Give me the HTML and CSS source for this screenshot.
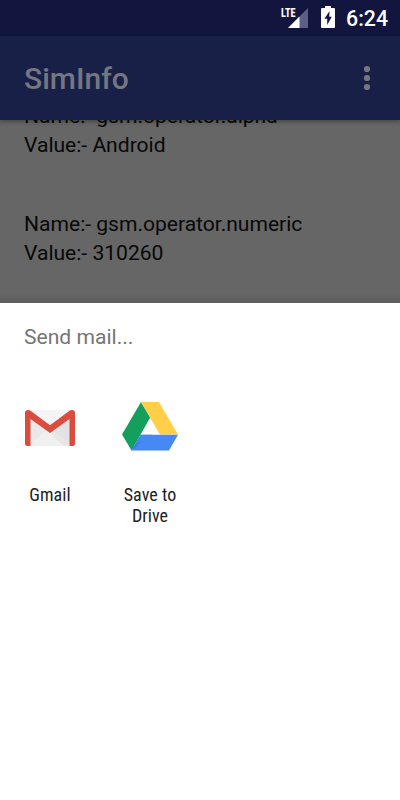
FILE: index.html
```html
<!DOCTYPE html>
<html lang="en">
<head>
<meta charset="utf-8">
<title>SimInfo</title>
<link rel="stylesheet" href="styles.css">
</head>
<body>
<div class="screen">
  <header class="status">
    <svg class="signal" width="30" height="24" viewBox="0 0 30 24">
      <path d="M28 2V22H8Z" fill="#5b5f86"/>
      <path d="M19.500 10.500V22H8Z" fill="#fff"/>
      <path d="M0 0H17V12H0Z" fill="#12163f"/>
      <text class="lte" x="1" y="10.900" textLength="14.500" lengthAdjust="spacingAndGlyphs">LTE</text>
    </svg>
    <svg class="battery" width="14" height="22" viewBox="0 0 14 22">
      <path fill="#fff" fill-rule="evenodd" d="M4 0H10V2H13Q14 2 14 3V21Q14 22 13 22H1Q0 22 0 21V3Q0 2 1 2H4ZM8.6 5L3.4 12.8H6.2V19L10.8 10.8H8.2Z"/>
    </svg>
    <span class="clock">6:24</span>
  </header>
  <div class="appbar">
    <h1 class="title">SimInfo</h1>
    <svg class="more" width="8" height="26" viewBox="0 0 8 26" fill="#757780">
      <circle cx="4" cy="4" r="3.1"/><circle cx="4" cy="13" r="3.1"/><circle cx="4" cy="22" r="3.1"/>
    </svg>
  </div>
  <main class="content">
    <p class="entry">Name:- gsm.operator.alpha<br>Value:- Android</p>
    <p class="entry">Name:- gsm.operator.numeric<br>Value:- 310260</p>
  </main>
  <section class="sheet">
    <h2 class="prompt">Send mail...</h2>
    <div class="apps">
      <div class="app">
        <svg class="icon" width="64" height="64" viewBox="0 0 64 64">
          <path d="M10 14H54V50H10Z" fill="#e9e9e9"/>
          <path d="M10 50L32 31L54 50Z" fill="#f0f0f0"/>
          <path d="M10 14H54L32 31Z" fill="#f5f5f5"/>
          <path d="M32 37L54 20V50H46Z" fill="#dadada" opacity=".4"/>
          <path d="M7 17Q7 14 10 14Q11.500 14 12.500 14.800L32 29.300L51.500 14.800Q52.500 14 54 14Q57 14 57 17V47.500Q57 50 54.500 50H51.500V23L32 37L12.500 23V50H9.500Q7 50 7 47.500Z" fill="#db4c3f"/>
        </svg>
        <span class="label">Gmail</span>
      </div>
      <div class="app">
        <svg class="icon" width="64" height="64" viewBox="0 0 64 64">
          <defs>
            <linearGradient id="fold" x1="0" y1="1" x2="1" y2="0">
              <stop offset="0" stop-color="#3b72d4"/>
              <stop offset=".6" stop-color="#4688f4"/>
            </linearGradient>
          </defs>
          <path d="M23 6L32.200 21.500L13.500 54.500L4 38.500Z" fill="#12a05c"/>
          <path d="M23 6H41L60 38.500H42Z" fill="#ffcf48"/>
          <path d="M22.600 38.800H60L51 54.500H13.500Z" fill="#4688f4"/>
          <path d="M22.600 38.800H34L13.500 54.500Z" fill="url(#fold)"/>
        </svg>
        <span class="label">Save to Drive</span>
      </div>
    </div>
  </section>
</div>
</body>
</html>
```

FILE: styles.css
```css
body {
  margin: 0;
  font-family: Roboto, "Liberation Sans", sans-serif;
}
.screen {
  display: flex;
  flex-direction: column;
  width: 400px;
  height: 800px;
  overflow: hidden;
  background: #666;
}
.status {
  display: flex;
  box-sizing: border-box;
  height: 36px;
  padding: 6px 12px 0 0;
  justify-content: flex-end;
  background: #12163f;
}
.signal {
  margin-right: 11px;
}
.lte {
  font: 700 12.5px Roboto, sans-serif;
  font-stretch: 75%;
  fill: #fff;
}
.battery {
  margin-right: 11px;
}
.clock {
  color: #fff;
  font-size: 21.3px;
  font-weight: 500;
  line-height: 26px;
}
.appbar {
  display: flex;
  box-sizing: border-box;
  height: 84px;
  padding: 0 29px 0 24px;
  align-items: center;
  justify-content: space-between;
  background: #192048;
  box-shadow: 0 1px 5px rgba(0, 0, 0, 0.4);
  z-index: 1;
}
.title {
  margin: 0;
  color: #757780;
  font-size: 30px;
  font-weight: 500;
}
.content {
  height: 183px;
  padding-left: 24px;
  overflow: hidden;
  background: linear-gradient(#666 95%, #5c5c5c);
}
.entry {
  margin: -19px 0 69px;
  color: #080808;
  font-size: 21.1px;
  letter-spacing: -0.02px;
  line-height: 29px;
}
.sheet {
  flex: 1;
  background: #fff;
}
.prompt {
  margin: 0;
  padding: 20px 24px 0;
  color: #757575;
  font-size: 21.1px;
  font-weight: 400;
  line-height: 28px;
}
.apps {
  display: flex;
  padding-top: 45px;
}
.app {
  display: flex;
  width: 100px;
  flex-direction: column;
  align-items: center;
}
.label {
  width: 66px;
  margin-top: 24px;
  color: #222;
  font-family: "Roboto Condensed", Roboto, sans-serif;
  font-size: 18px;
  font-stretch: 75%;
  letter-spacing: 0.05px;
  line-height: 21px;
  text-align: center;
}
```
